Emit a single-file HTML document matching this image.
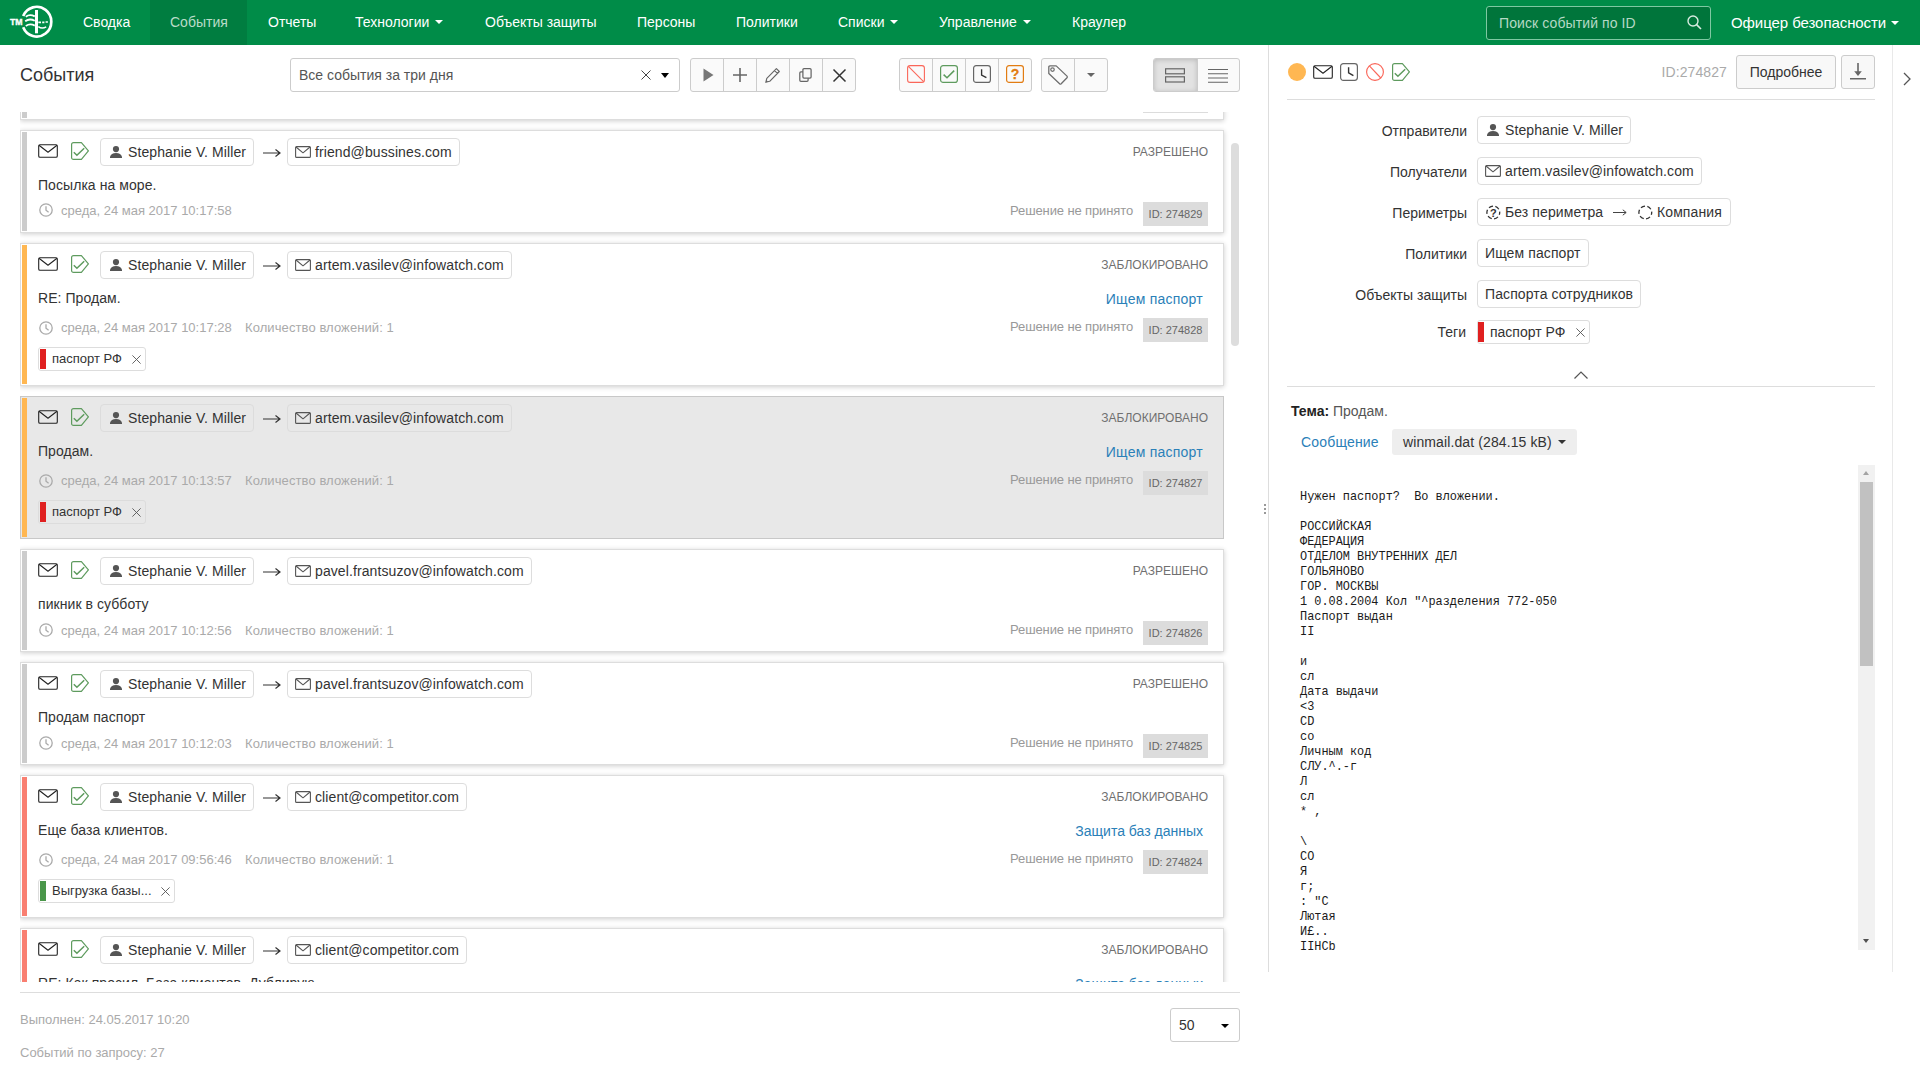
<!DOCTYPE html>
<html lang="ru">
<head>
<meta charset="utf-8">
<title>События</title>
<style>
*{box-sizing:border-box;margin:0;padding:0}
html,body{width:1920px;height:1080px;overflow:hidden;background:#fff}
body{font-family:"Liberation Sans",sans-serif;font-size:14px;color:#333;position:relative}
svg{display:block;overflow:visible}
.abs{position:absolute}
/* NAV */
#nav{position:absolute;left:0;top:0;width:1920px;height:45px;background:#008c48}
#nav .it{position:absolute;top:0;height:45px;line-height:45px;color:#fff;font-size:14px;white-space:nowrap}
#nav .act{position:absolute;left:150px;top:0;width:97px;height:45px;background:#007d40}
.caret{display:inline-block;width:0;height:0;border-left:4px solid transparent;border-right:4px solid transparent;border-top:4px solid #fff;vertical-align:middle;margin-left:6px;position:relative;top:-1px}
#srch{position:absolute;left:1486px;top:6px;width:225px;height:34px;border:1px solid #7fc8a2;border-radius:3px;background:#00753b}
#srch span{position:absolute;left:12px;top:0;line-height:32px;font-size:14px;color:#b5d9c5;letter-spacing:.1px}
/* TOOLBAR */
#title{position:absolute;left:20px;top:64px;font-size:18px;line-height:22px;color:#333}
#sel{position:absolute;left:290px;top:58px;width:390px;height:34px;border:1px solid #ccc;border-radius:3px;background:#fff}
#sel span{position:absolute;left:8px;top:0;line-height:32px;font-size:14px;color:#555}
.bg{position:absolute;top:58px;height:34px;border:1px solid #ccc;border-radius:3px;background:#fafafa;overflow:hidden}
.bg i{position:absolute;top:0;width:1px;height:32px;background:#ccc}
.bg svg{position:absolute}
/* LIST */
#list{position:absolute;left:20px;top:112px;width:1230px;height:870px;overflow:hidden}
.card{position:absolute;left:0;width:1204px;border:1px solid #ddd;background:#fff;box-shadow:0 1px 5px rgba(0,0,0,.2)}
.card.s{height:103px}
.card.t{height:143px}
.card.sel{background:#e8e8e8;border-color:#c8c8c8;box-shadow:none}
.card .bar{position:absolute;left:1px;top:1px;bottom:1px;width:5px;background:#ccc}
.card .bar.o{background:#ffb752}
.card .bar.r{background:#f97f71}
.card .env{position:absolute;left:17px;top:13px}
.card .chk{position:absolute;left:50px;top:11px}
.chip{position:absolute;height:28px;border:1px solid #ddd;border-radius:4px;background:#fff;font-size:14px;line-height:26px;color:#333;white-space:nowrap;letter-spacing:.1px}
.card.sel .chip{background:transparent;border-color:#dcdcdc}
.card .c1{left:79px;top:7px;width:154px}
.card .c2{left:266px;top:7px}
.chip .tx{position:absolute;top:0}
.card .arr{position:absolute;left:242px;top:17px}
.card .subj{position:absolute;left:17px;top:44px;line-height:20px;font-size:14px;color:#333;white-space:nowrap;letter-spacing:.06px}
.card .clk{position:absolute;left:18px}
.card .date{position:absolute;left:40px;font-size:13px;line-height:18px;color:#aaa;white-space:nowrap}
.card .att{position:absolute;left:224px;font-size:13px;line-height:18px;color:#aaa;white-space:nowrap;letter-spacing:.09px}
.card.s .clk{top:73.4px}.card.s .date,.card.s .att{top:72px}.card.s.na .clk{top:72.4px}.card.s.na .date{top:70.7px}
.card.t .clk{top:76.5px}.card.t .date,.card.t .att{top:75px}
.card .st{position:absolute;right:15px;top:13px;font-size:12px;line-height:16px;color:#707070;white-space:nowrap}
.card .pol{position:absolute;right:20px;top:45px;font-size:14px;line-height:20px;color:#2a80b8;white-space:nowrap}
.card .dec{position:absolute;right:90px;font-size:13px;line-height:18px;color:#999;white-space:nowrap;letter-spacing:-.12px}
.card .id{position:absolute;right:15px;width:65px;height:24px;background:#dcdcdc;font-size:11px;line-height:24px;text-align:center;color:#666;white-space:nowrap}
.card.s .dec{top:71px}.card.s .id{top:71px}
.card.t .dec{top:74px}.card.t .id{top:74px}
.tag{position:absolute;height:24px;border:1px solid #ddd;border-radius:3px;background:#fff;white-space:nowrap;color:#333}
.tag b{position:absolute;left:1px;top:1px;bottom:1px;width:6px;background:#e02020}
.tag b.g{background:#4a964a}
.card .tag{left:17px;top:103px;font-size:13px;line-height:22px}
.card.sel .tag{background:transparent;border-color:#dcdcdc}
.tag span{position:absolute;left:13px;top:0}
.tag svg{position:absolute;top:6.5px}
/* RIGHT */
#vl{position:absolute;left:1268px;top:45px;width:1px;height:927px;background:#ddd}
#vr{position:absolute;left:1892px;top:45px;width:1px;height:927px;background:#e9e9e9}
.hr{position:absolute;height:1px;background:#ddd}
.lbl{position:absolute;right:453px;font-size:14px;line-height:20px;color:#333;white-space:nowrap}
.btn{position:absolute;border:1px solid #ccc;border-radius:3px;background:#f8f8f8;font-size:14px;color:#333;text-align:center}
pre{position:absolute;left:1300px;top:490px;font-family:"Liberation Mono",monospace;font-size:11.9px;line-height:15px;color:#1a1a1a;white-space:pre}
.ft{position:absolute;left:20px;font-size:13px;line-height:18px;color:#aaa;white-space:nowrap}
</style>
</head>
<body>
<svg width="0" height="0" style="position:absolute">
<defs>
<symbol id="env" viewBox="0 0 20 14"><rect x=".7" y=".7" width="18.6" height="12.6" rx="1.3" fill="none" stroke="#222" stroke-width="1.1"/><path d="M1,1.2 L10,8.2 L19,1.2" fill="none" stroke="#222" stroke-width="1.1" stroke-linejoin="round"/></symbol>
<symbol id="envs" viewBox="0 0 16 12"><rect x=".6" y=".6" width="14.8" height="10.8" rx="1" fill="none" stroke="#555" stroke-width="1.1"/><path d="M1,1 L8,6.8 L15,1" fill="none" stroke="#555" stroke-width="1.1" stroke-linejoin="round"/></symbol>
<symbol id="chk" viewBox="0 0 18 18"><path d="M2.6,.6 H10.4 L17.4,8.8 L10.4,17.4 H2.6 Q.6,17.4 .6,15.4 V2.6 Q.6,.6 2.6,.6 Z" fill="none" stroke="#5e9b5e" stroke-width="1.2" stroke-linejoin="round"/><path d="M2.8,10.3 L5.9,13.2 L13.2,6.2" fill="none" stroke="#5e9b5e" stroke-width="1.5"/></symbol>
<symbol id="usr" viewBox="0 0 12 12"><circle cx="6" cy="3.1" r="3.1" fill="#555"/><path d="M0,12 V10.8 Q1,7 6,7 Q11,7 12,10.8 V12 Z" fill="#555"/></symbol>
<symbol id="arr" viewBox="0 0 18 10"><path d="M0,5 H16.5 M12.5,1.5 L17,5 L12.5,8.5" fill="none" stroke="#333" stroke-width="1.2"/></symbol>
<symbol id="clk" viewBox="0 0 14 14"><circle cx="7" cy="7" r="6.2" fill="none" stroke="#aaa" stroke-width="1.3"/><path d="M7,3.2 V7.2 L9.6,9.2" fill="none" stroke="#aaa" stroke-width="1.3"/></symbol>
<symbol id="x" viewBox="0 0 9 9"><path d="M.4,.4 L8.6,8.6 M8.6,.4 L.4,8.6" stroke="#555" stroke-width=".9" fill="none"/></symbol>
</defs>
</svg>

<div id="nav">
 <div class="act"></div>
 <svg class="abs" style="left:8px;top:4px" width="48" height="36" viewBox="0 0 48 36">
  <path d="M15.17,12.1 A14.6,14.9 0 1 1 15.17,23.3" fill="none" stroke="#fff" stroke-width="2.7"/>
  <rect x="27" y="6" width="3" height="23.3" fill="#fff"/>
  <path d="M17.8,12.8 Q21.5,9.6 26.8,12.4 M17.2,17.2 Q21.5,14 26.8,16.8 M17.8,21.9 Q22,19 26.8,21.6" fill="none" stroke="#fff" stroke-width="1.8"/>
  <path d="M30.3,18.4 H33 M34.2,18.4 H36.4 M37.6,18 H39.9" fill="none" stroke="#fff" stroke-width="1.7"/>
  <path d="M30.3,22.6 Q34,25.2 38.2,22.8" fill="none" stroke="#fff" stroke-width="1.5"/>
  <text x="2" y="21.2" font-family="Liberation Sans" font-weight="bold" font-size="8.7" fill="#fff" stroke="#fff" stroke-width=".35">TM</text>
 </svg>
 <div class="it" style="left:83px">Сводка</div>
 <div class="it" style="left:170px;color:#b9dcc8">События</div>
 <div class="it" style="left:268px">Отчеты</div>
 <div class="it" style="left:355px">Технологии<span class="caret"></span></div>
 <div class="it" style="left:485px">Объекты защиты</div>
 <div class="it" style="left:637px">Персоны</div>
 <div class="it" style="left:736px">Политики</div>
 <div class="it" style="left:838px">Списки<span class="caret"></span></div>
 <div class="it" style="left:939px">Управление<span class="caret"></span></div>
 <div class="it" style="left:1072px">Краулер</div>
 <div id="srch"><span>Поиск событий по ID</span>
  <svg class="abs" style="left:200px;top:8px" width="15" height="15" viewBox="0 0 15 15"><circle cx="6" cy="6" r="5" fill="none" stroke="#d8ece1" stroke-width="1.4"/><path d="M9.6,9.6 L14,14" stroke="#d8ece1" stroke-width="1.6"/></svg>
 </div>
 <div class="it" style="left:1731px;font-size:15px;letter-spacing:-.07px">Офицер безопасности<span class="caret" style="margin-left:5px"></span></div>
</div>

<div id="title">События</div>
<div id="sel"><span>Все события за три дня</span>
 <svg class="abs" style="left:350px;top:11px" width="10" height="10" viewBox="0 0 10 10"><path d="M.5,.5 L9.5,9.5 M9.5,.5 L.5,9.5" stroke="#444" stroke-width="1" fill="none"/></svg>
 <div class="abs" style="left:370px;top:14px;width:0;height:0;border-left:4px solid transparent;border-right:4px solid transparent;border-top:5px solid #000"></div>
</div>
<div class="bg" style="left:690px;width:166px">
 <i style="left:32px"></i><i style="left:65px"></i><i style="left:98px"></i><i style="left:131px"></i>
 <svg style="left:12px;top:9px" width="11" height="14" viewBox="0 0 11 14"><path d="M.5,.5 L10.5,7 L.5,13.5 Z" fill="#777"/></svg>
 <svg style="left:42px;top:9px" width="14" height="14" viewBox="0 0 14 14"><path d="M7,0 V14 M0,7 H14" stroke="#666" stroke-width="1.6" fill="none"/></svg>
 <svg style="left:74px;top:9px" width="15" height="15" viewBox="0 0 15 15"><path d="M11.4,.7 L14.3,3.5 L4.7,13.3 L.8,14.3 L1.8,10.4 Z M9.5,2.6 L12.5,5.4" fill="none" stroke="#666" stroke-width="1.15" stroke-linejoin="round"/><path d="M.8,14.3 L1.4,12 L3.1,13.7 Z" fill="#666"/></svg>
 <svg style="left:108px;top:9px" width="14" height="14" viewBox="0 0 14 14"><rect x="3.9" y=".7" width="8.2" height="9.5" rx="1.1" fill="#fafafa" stroke="#666" stroke-width="1.25"/><path d="M3.9,3.9 H1.9 Q.8,3.9 .8,5 V12.2 Q.8,13.3 1.9,13.3 H8 Q9.1,13.3 9.1,12.2 V10.2" fill="none" stroke="#666" stroke-width="1.25"/></svg>
 <svg style="left:142px;top:10px" width="13" height="13" viewBox="0 0 13 13"><path d="M.5,.5 L12.5,12.5 M12.5,.5 L.5,12.5" stroke="#333" stroke-width="1.5" fill="none"/></svg>
</div>
<div class="bg" style="left:899px;width:133px">
 <i style="left:32px"></i><i style="left:65px"></i><i style="left:98px"></i>
 <svg style="left:7px;top:6px" width="18" height="18" viewBox="0 0 18 18"><rect x=".6" y=".6" width="16.8" height="16.8" rx="2.5" fill="none" stroke="#fa6659" stroke-width="1.1"/><path d="M1.4,1.4 L16.6,16.6" stroke="#fa6659" stroke-width="1.05"/></svg>
 <svg style="left:40px;top:6px" width="18" height="18" viewBox="0 0 18 18"><rect x=".6" y=".6" width="16.8" height="16.8" rx="2.5" fill="none" stroke="#5e9b5e" stroke-width="1.2"/><path d="M3.6,9.6 L7,12.8 L14.2,5.6" fill="none" stroke="#5e9b5e" stroke-width="1.5"/></svg>
 <svg style="left:73px;top:6px" width="18" height="18" viewBox="0 0 18 18"><rect x=".6" y=".6" width="16.8" height="16.8" rx="2.5" fill="none" stroke="#666" stroke-width="1.2"/><path d="M8.6,4.3 V10 L13.4,12.7" fill="none" stroke="#333" stroke-width="1.35"/></svg>
 <svg style="left:106px;top:6px" width="18" height="18" viewBox="0 0 18 18"><rect x=".6" y=".6" width="16.8" height="16.8" rx="2.5" fill="none" stroke="#e27c12" stroke-width="1.2"/><text x="9" y="14" text-anchor="middle" font-family="Liberation Sans" font-weight="bold" font-size="14" fill="#e27c12" stroke="#e27c12" stroke-width=".3">?</text></svg>
</div>
<div class="bg" style="left:1041px;width:67px">
 <i style="left:32px"></i>
 <svg style="left:6px;top:5px" width="21" height="21" viewBox="0 0 21 21"><path d="M.8,3 Q.8,1.9 1.9,1.9 H8.2 L19,12.1 Q19.7,12.9 19,13.7 L13.2,19.8 Q12.4,20.5 11.6,19.8 L.8,9.5 Z" fill="none" stroke="#6e6e6e" stroke-width="1.3" stroke-linejoin="round"/><circle cx="4.5" cy="5.6" r="1.75" fill="none" stroke="#6e6e6e" stroke-width="1.2"/></svg>
 <div class="abs" style="left:45px;top:14px;width:0;height:0;border-left:4px solid transparent;border-right:4px solid transparent;border-top:4px solid #666"></div>
</div>
<div class="bg" style="left:1153px;width:87px">
 <div class="abs" style="left:0;top:0;width:43px;height:32px;background:#e2e2e2;box-shadow:inset 0 1px 5px rgba(0,0,0,.18)"></div>
 <i style="left:43px"></i>
 <svg style="left:11px;top:9px" width="20" height="15" viewBox="0 0 20 15"><rect x=".6" y=".8" width="18.8" height="5" fill="none" stroke="#666" stroke-width="1.2"/><rect x=".6" y="8.8" width="18.8" height="5.2" fill="none" stroke="#666" stroke-width="1.2"/></svg>
 <svg style="left:54px;top:10px" width="20" height="14" viewBox="0 0 20 14"><path d="M0,.5 H20 M0,4.75 H20 M0,9 H20 M0,13.25 H20" stroke="#666" stroke-width="1"/></svg>
</div>
<!--TOOLBAR-END-->
<div id="list">
<div class="card s" style="top:-95px">
 <div class="bar "></div>
 <svg class="env" width="20" height="14"><use href="#env"/></svg><svg class="chk" width="18" height="18"><use href="#chk"/></svg>
 <div class="chip c1"><svg class="abs" style="left:9px;top:7px" width="12" height="12"><use href="#usr"/></svg><span class="tx" style="left:27px">Stephanie V. Miller</span></div>
 <svg class="arr" width="18" height="10"><use href="#arr"/></svg>
 <div class="chip c2" style="padding:0 7px 0 27px"><svg class="abs" style="left:7px;top:7px" width="16" height="12"><use href="#envs"/></svg>x@x.com</div>
 <div class="subj"></div>
 <svg class="clk" width="14" height="14"><use href="#clk"/></svg><div class="date"></div>
 <div class="st"></div>
 <div class="dec">Решение не принято</div><div class="id">ID: 274830</div>
</div>
<div class="card s na" style="top:18px">
 <div class="bar "></div>
 <svg class="env" width="20" height="14"><use href="#env"/></svg><svg class="chk" width="18" height="18"><use href="#chk"/></svg>
 <div class="chip c1"><svg class="abs" style="left:9px;top:7px" width="12" height="12"><use href="#usr"/></svg><span class="tx" style="left:27px">Stephanie V. Miller</span></div>
 <svg class="arr" width="18" height="10"><use href="#arr"/></svg>
 <div class="chip c2" style="padding:0 7px 0 27px"><svg class="abs" style="left:7px;top:7px" width="16" height="12"><use href="#envs"/></svg>friend@bussines.com</div>
 <div class="subj">Посылка на море.</div>
 <svg class="clk" width="14" height="14"><use href="#clk"/></svg><div class="date">среда, 24 мая 2017 10:17:58</div>
 <div class="st">РАЗРЕШЕНО</div>
 <div class="dec">Решение не принято</div><div class="id">ID: 274829</div>
</div>
<div class="card t" style="top:131px">
 <div class="bar o"></div>
 <svg class="env" width="20" height="14"><use href="#env"/></svg><svg class="chk" width="18" height="18"><use href="#chk"/></svg>
 <div class="chip c1"><svg class="abs" style="left:9px;top:7px" width="12" height="12"><use href="#usr"/></svg><span class="tx" style="left:27px">Stephanie V. Miller</span></div>
 <svg class="arr" width="18" height="10"><use href="#arr"/></svg>
 <div class="chip c2" style="padding:0 7px 0 27px"><svg class="abs" style="left:7px;top:7px" width="16" height="12"><use href="#envs"/></svg>artem.vasilev@infowatch.com</div>
 <div class="subj">RE: Продам.</div>
 <svg class="clk" width="14" height="14"><use href="#clk"/></svg><div class="date">среда, 24 мая 2017 10:17:28</div>
 <div class="att">Количество вложений: 1</div>
 <div class="st">ЗАБЛОКИРОВАНО</div>
 <div class="pol" style="letter-spacing:.24px">Ищем паспорт</div>
 <div class="dec">Решение не принято</div><div class="id">ID: 274828</div>
 <div class="tag" style="width:108px"><b class=""></b><span>паспорт РФ</span><svg style="right:4.5px" width="9" height="9"><use href="#x"/></svg></div>
</div>
<div class="card t sel" style="top:284px">
 <div class="bar o"></div>
 <svg class="env" width="20" height="14"><use href="#env"/></svg><svg class="chk" width="18" height="18"><use href="#chk"/></svg>
 <div class="chip c1"><svg class="abs" style="left:9px;top:7px" width="12" height="12"><use href="#usr"/></svg><span class="tx" style="left:27px">Stephanie V. Miller</span></div>
 <svg class="arr" width="18" height="10"><use href="#arr"/></svg>
 <div class="chip c2" style="padding:0 7px 0 27px"><svg class="abs" style="left:7px;top:7px" width="16" height="12"><use href="#envs"/></svg>artem.vasilev@infowatch.com</div>
 <div class="subj">Продам.</div>
 <svg class="clk" width="14" height="14"><use href="#clk"/></svg><div class="date">среда, 24 мая 2017 10:13:57</div>
 <div class="att">Количество вложений: 1</div>
 <div class="st">ЗАБЛОКИРОВАНО</div>
 <div class="pol" style="letter-spacing:.24px">Ищем паспорт</div>
 <div class="dec">Решение не принято</div><div class="id">ID: 274827</div>
 <div class="tag" style="width:108px"><b class=""></b><span>паспорт РФ</span><svg style="right:4.5px" width="9" height="9"><use href="#x"/></svg></div>
</div>
<div class="card s" style="top:437px">
 <div class="bar "></div>
 <svg class="env" width="20" height="14"><use href="#env"/></svg><svg class="chk" width="18" height="18"><use href="#chk"/></svg>
 <div class="chip c1"><svg class="abs" style="left:9px;top:7px" width="12" height="12"><use href="#usr"/></svg><span class="tx" style="left:27px">Stephanie V. Miller</span></div>
 <svg class="arr" width="18" height="10"><use href="#arr"/></svg>
 <div class="chip c2" style="padding:0 7px 0 27px"><svg class="abs" style="left:7px;top:7px" width="16" height="12"><use href="#envs"/></svg>pavel.frantsuzov@infowatch.com</div>
 <div class="subj">пикник в субботу</div>
 <svg class="clk" width="14" height="14"><use href="#clk"/></svg><div class="date">среда, 24 мая 2017 10:12:56</div>
 <div class="att">Количество вложений: 1</div>
 <div class="st">РАЗРЕШЕНО</div>
 <div class="dec">Решение не принято</div><div class="id">ID: 274826</div>
</div>
<div class="card s" style="top:550px">
 <div class="bar "></div>
 <svg class="env" width="20" height="14"><use href="#env"/></svg><svg class="chk" width="18" height="18"><use href="#chk"/></svg>
 <div class="chip c1"><svg class="abs" style="left:9px;top:7px" width="12" height="12"><use href="#usr"/></svg><span class="tx" style="left:27px">Stephanie V. Miller</span></div>
 <svg class="arr" width="18" height="10"><use href="#arr"/></svg>
 <div class="chip c2" style="padding:0 7px 0 27px"><svg class="abs" style="left:7px;top:7px" width="16" height="12"><use href="#envs"/></svg>pavel.frantsuzov@infowatch.com</div>
 <div class="subj">Продам паспорт</div>
 <svg class="clk" width="14" height="14"><use href="#clk"/></svg><div class="date">среда, 24 мая 2017 10:12:03</div>
 <div class="att">Количество вложений: 1</div>
 <div class="st">РАЗРЕШЕНО</div>
 <div class="dec">Решение не принято</div><div class="id">ID: 274825</div>
</div>
<div class="card t" style="top:663px">
 <div class="bar r"></div>
 <svg class="env" width="20" height="14"><use href="#env"/></svg><svg class="chk" width="18" height="18"><use href="#chk"/></svg>
 <div class="chip c1"><svg class="abs" style="left:9px;top:7px" width="12" height="12"><use href="#usr"/></svg><span class="tx" style="left:27px">Stephanie V. Miller</span></div>
 <svg class="arr" width="18" height="10"><use href="#arr"/></svg>
 <div class="chip c2" style="padding:0 7px 0 27px"><svg class="abs" style="left:7px;top:7px" width="16" height="12"><use href="#envs"/></svg>client@competitor.com</div>
 <div class="subj">Еще база клиентов.</div>
 <svg class="clk" width="14" height="14"><use href="#clk"/></svg><div class="date">среда, 24 мая 2017 09:56:46</div>
 <div class="att">Количество вложений: 1</div>
 <div class="st">ЗАБЛОКИРОВАНО</div>
 <div class="pol">Защита баз данных</div>
 <div class="dec">Решение не принято</div><div class="id">ID: 274824</div>
 <div class="tag" style="width:137px"><b class="g"></b><span>Выгрузка базы...</span><svg style="right:4.5px" width="9" height="9"><use href="#x"/></svg></div>
</div>
<div class="card t" style="top:816px">
 <div class="bar r"></div>
 <svg class="env" width="20" height="14"><use href="#env"/></svg><svg class="chk" width="18" height="18"><use href="#chk"/></svg>
 <div class="chip c1"><svg class="abs" style="left:9px;top:7px" width="12" height="12"><use href="#usr"/></svg><span class="tx" style="left:27px">Stephanie V. Miller</span></div>
 <svg class="arr" width="18" height="10"><use href="#arr"/></svg>
 <div class="chip c2" style="padding:0 7px 0 27px"><svg class="abs" style="left:7px;top:7px" width="16" height="12"><use href="#envs"/></svg>client@competitor.com</div>
 <div class="subj">RE: Как просил. База клиентов. Дублирую.</div>
 <svg class="clk" width="14" height="14"><use href="#clk"/></svg><div class="date">среда, 24 мая 2017 09:50:12</div>
 <div class="att">Количество вложений: 1</div>
 <div class="st">ЗАБЛОКИРОВАНО</div>
 <div class="pol">Защита баз данных</div>
 <div class="dec">Решение не принято</div><div class="id">ID: 274823</div>
 <div class="tag" style="width:137px"><b class="g"></b><span>Выгрузка базы...</span><svg style="right:4.5px" width="9" height="9"><use href="#x"/></svg></div>
</div>
</div>
<div class="abs" style="left:1231px;top:143px;width:8px;height:203px;border-radius:4px;background:#ddd"></div>
<!--LIST-END-->
<div id="vl"></div><div id="vr"></div>
<div class="abs" style="left:1264px;top:504px;width:2px;height:2px;background:#999;box-shadow:0 4px 0 #999,0 8px 0 #999"></div>
<div class="abs" style="left:1288px;top:63px;width:18px;height:18px;border-radius:9px;background:#ffb752"></div>
<svg class="abs" style="left:1313px;top:65px" width="20" height="14"><use href="#env"/></svg>
<svg class="abs" style="left:1340px;top:63px" width="18" height="18" viewBox="0 0 18 18"><rect x=".6" y=".6" width="16.8" height="16.8" rx="2.8" fill="none" stroke="#666" stroke-width="1.2"/><path d="M8.6,4.2 V9.8 L13.4,12.6" fill="none" stroke="#333" stroke-width="1.4"/></svg>
<svg class="abs" style="left:1366px;top:63px" width="18" height="18" viewBox="0 0 18 18"><circle cx="9" cy="9" r="8.4" fill="none" stroke="#fa6659" stroke-width="1.15"/><path d="M3.4,2.8 L14.8,15" stroke="#fa6659" stroke-width="1.1"/></svg>
<svg class="abs" style="left:1392px;top:63px" width="18" height="18"><use href="#chk"/></svg>
<div class="abs" style="left:1600px;top:62px;width:127px;text-align:right;font-size:14px;line-height:20px;color:#aaa;letter-spacing:.1px">ID:274827</div>
<div class="btn" style="left:1736px;top:55px;width:100px;height:34px;line-height:32px">Подробнее</div>
<div class="btn" style="left:1841px;top:55px;width:34px;height:34px">
 <svg class="abs" style="left:8px;top:7px" width="16" height="17" viewBox="0 0 16 17"><path d="M8,0 V10 M0,15.8 H16" fill="none" stroke="#666" stroke-width="1.6"/><path d="M4.2,8.2 H11.8 L8,13 Z" fill="#666"/></svg>
</div>
<svg class="abs" style="left:1903px;top:72px" width="8" height="14" viewBox="0 0 8 14"><path d="M1,1 L7,7 L1,13" fill="none" stroke="#555" stroke-width="1.3"/></svg>
<div class="hr" style="left:1287px;top:99px;width:588px"></div>

<div class="lbl" style="top:121px">Отправители</div>
<div class="chip" style="left:1477px;top:116px;width:154px"><svg class="abs" style="left:9px;top:7px" width="12" height="12"><use href="#usr"/></svg><span class="tx" style="left:27px">Stephanie V. Miller</span></div>
<div class="lbl" style="top:162px">Получатели</div>
<div class="chip" style="left:1477px;top:157px;padding:0 7px 0 27px"><svg class="abs" style="left:7px;top:7px" width="16" height="12"><use href="#envs"/></svg>artem.vasilev@infowatch.com</div>
<div class="lbl" style="top:203px">Периметры</div>
<div class="chip" style="left:1477px;top:198px;width:254px">
 <svg class="abs" style="left:8px;top:6px" width="15" height="15" viewBox="0 0 15 15"><circle cx="7.3" cy="7.5" r="6.4" fill="none" stroke="#333" stroke-width="1.3" stroke-dasharray="4.3 2.4" stroke-dashoffset="2"/><text x="7.3" y="11.6" text-anchor="middle" font-family="Liberation Sans" font-weight="bold" font-size="11" fill="#333">?</text></svg>
 <span class="tx" style="left:27px">Без периметра</span>
 <svg class="abs" style="left:135px;top:9px" width="14" height="9" viewBox="0 0 14 9"><path d="M0,4.5 H13 M9.8,1.8 L13.2,4.5 L9.8,7.2" fill="none" stroke="#444" stroke-width="1"/></svg>
 <svg class="abs" style="left:160px;top:6px" width="15" height="15" viewBox="0 0 15 15"><circle cx="7.3" cy="7.5" r="6.4" fill="none" stroke="#333" stroke-width="1.3" stroke-dasharray="4.3 2.4" stroke-dashoffset="2"/></svg>
 <span class="tx" style="left:179px">Компания</span>
</div>
<div class="lbl" style="top:244px">Политики</div>
<div class="chip" style="left:1477px;top:239px;padding:0 7px">Ищем паспорт</div>
<div class="lbl" style="top:285px">Объекты защиты</div>
<div class="chip" style="left:1477px;top:280px;padding:0 7px">Паспорта сотрудников</div>
<div class="lbl" style="top:322px;right:454px">Теги</div>
<div class="tag" style="left:1477px;top:320px;width:113px;font-size:14px;line-height:22px"><b style="left:0"></b><span style="left:12px">паспорт РФ</span><svg style="right:4.5px" width="9" height="9"><use href="#x"/></svg></div>
<svg class="abs" style="left:1574px;top:371px" width="14" height="8" viewBox="0 0 14 8"><path d="M.5,7.5 L7,1 L13.5,7.5" fill="none" stroke="#555" stroke-width="1.2"/></svg>
<div class="hr" style="left:1287px;top:386px;width:588px"></div>

<div class="abs" style="left:1291px;top:401px;font-size:14px;line-height:20px;color:#555;white-space:nowrap"><b style="color:#222">Тема:</b> Продам.</div>
<div class="abs" style="left:1301px;top:432px;font-size:14px;line-height:20px;color:#2a80b8;letter-spacing:.18px">Сообщение</div>
<div class="abs" style="left:1392px;top:429px;width:185px;height:26px;border-radius:3px;background:#eee;font-size:14px;line-height:26px;color:#333;padding-left:11px;white-space:nowrap;letter-spacing:.11px">winmail.dat (284.15 kB)<span class="caret" style="border-top-color:#333;margin-left:6px"></span></div>
<pre>Нужен паспорт?  Во вложении.

РОССИЙСКАЯ
ФЕДЕРАЦИЯ
ОТДЕЛОМ ВНУТРЕННИХ ДЕЛ
ГОЛЬЯНОВО
ГОР. МОСКВЫ
1 0.08.2004 Кол "^разделения 772-050
Паспорт выдан
II

и
сл
Дата выдачи
&lt;3
CD
со
Личным код
СЛУ.^.-г
Л
сл
* ,

\
СО
Я
г;
: "С
Лютая
И£..
IIНСb</pre>
<div class="abs" style="left:1858px;top:465px;width:17px;height:485px;background:#f1f1f1"></div>
<div class="abs" style="left:1860px;top:482px;width:13px;height:184px;background:#c1c1c1"></div>
<div class="abs" style="left:1863px;top:471px;width:0;height:0;border-left:3.5px solid transparent;border-right:3.5px solid transparent;border-bottom:4px solid #a3a3a3"></div>
<div class="abs" style="left:1863px;top:939px;width:0;height:0;border-left:3.5px solid transparent;border-right:3.5px solid transparent;border-top:4px solid #505050"></div>
<!--RIGHT-END-->
<div class="hr" style="left:20px;top:992px;width:1220px"></div>
<div class="ft" style="top:1011px">Выполнен: 24.05.2017 10:20</div>
<div class="ft" style="top:1044px">Событий по запросу: 27</div>
<div class="abs" style="left:1170px;top:1008px;width:70px;height:34px;border:1px solid #ccc;border-radius:3px;background:#fff;font-size:14px;line-height:32px;color:#333;padding-left:8px">50
 <div class="abs" style="left:50px;top:15px;width:0;height:0;border-left:4px solid transparent;border-right:4px solid transparent;border-top:4px solid #000"></div>
</div>
<!--FOOTER-END-->
</body>
</html>
